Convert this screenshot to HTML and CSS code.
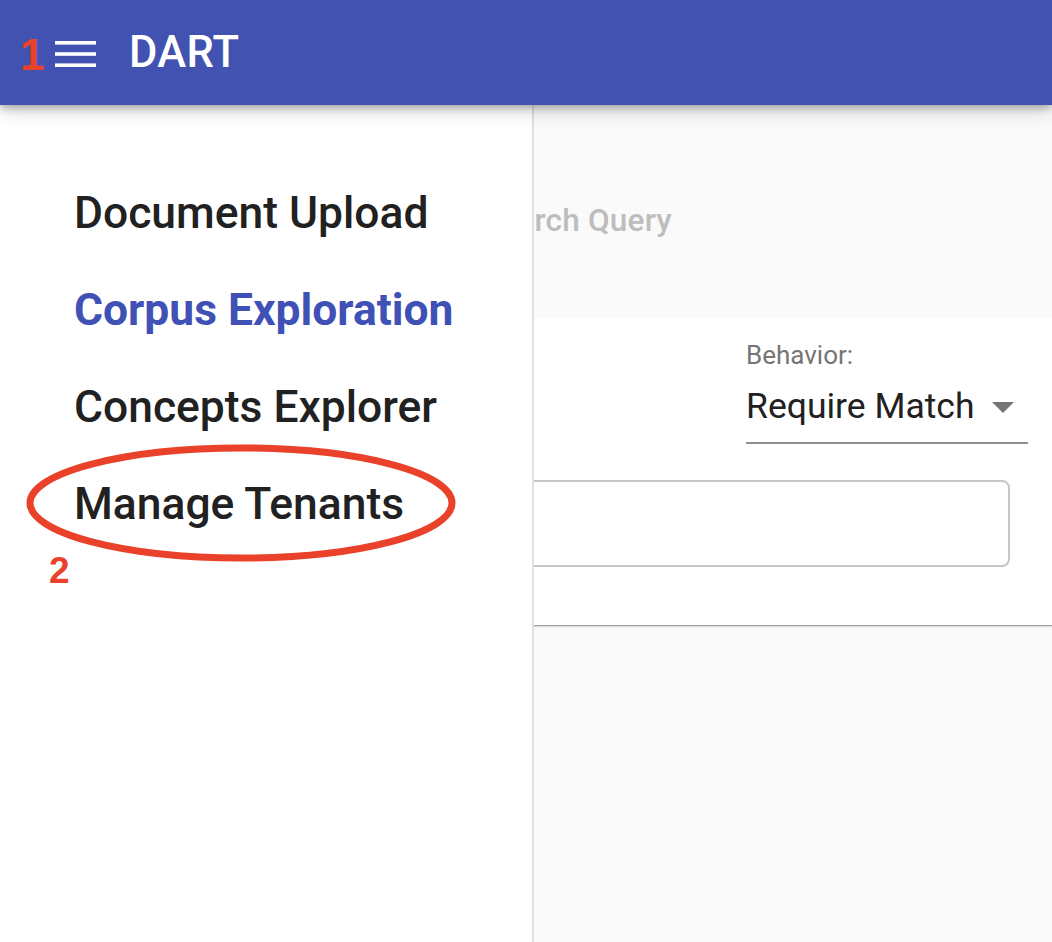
FILE: index.html
```html
<!DOCTYPE html>
<html lang="en">
<head>
<meta charset="utf-8">
<title>DART</title>
<link rel="stylesheet" href="styles.css">
</head>
<body>
<header class="appbar">
  <span class="note note-1">1</span>
  <button class="menu-btn" aria-label="Menu">
    <svg width="41" height="26" viewBox="0 0 41 26"><rect x="0" y="0" width="41" height="3.6" fill="#fff"/><rect x="0" y="11.2" width="41" height="3.6" fill="#fff"/><rect x="0" y="22.4" width="41" height="3.6" fill="#fff"/></svg>
  </button>
  <span class="title">DART</span>
</header>
<div class="page">
  <main class="main">
    <section class="search">
      <span class="placeholder">Search Query</span>
    </section>
    <section class="card">
      <div class="card-row">
        <div class="behavior">
          <label class="label">Behavior:</label>
          <div class="select">
            <span class="select-value">Require Match</span>
            <svg class="caret" width="22" height="11" viewBox="0 0 22 11"><path d="M0 0 L22 0 L11 11 Z" fill="#757575"/></svg>
          </div>
        </div>
      </div>
      <div class="outlined"></div>
    </section>
    <section class="rest"></section>
  </main>
  <nav class="drawer">
    <a class="nav-item">Document Upload</a>
    <a class="nav-item active">Corpus Exploration</a>
    <a class="nav-item">Concepts Explorer</a>
    <a class="nav-item">Manage Tenants</a>
    <svg class="ring" width="432" height="122" viewBox="0 0 432 122"><ellipse cx="216" cy="60" rx="211" ry="55" fill="none" stroke="#E9412A" stroke-width="7"/></svg>
    <span class="note note-2">2</span>
  </nav>
</div>
</body>
</html>
```
FILE: styles.css
```css
* { box-sizing: border-box; }
html, body { margin: 0; padding: 0; }
body {
  font-family: Roboto, "Liberation Sans", Arial, sans-serif;
  background: #fafafa;
  width: 1052px;
  height: 942px;
  overflow: hidden;
}
.appbar {
  position: relative;
  z-index: 3;
  height: 105px;
  background: #4152B1;
  display: flex;
  align-items: center;
  padding-left: 20px;
  box-shadow: 0 3px 8px rgba(0,0,0,0.28), 0 8px 18px rgba(0,0,0,0.12);
}
.note {
  color: #E9412A;
  font-family: "Liberation Sans", Arial, sans-serif;
  font-weight: 700;
}
.note-1 {
  font-size: 44px;
  line-height: 1;
  margin-top: 4px;
  width: 30px;
}
.menu-btn {
  background: none;
  border: 0;
  padding: 0;
  margin-left: 5px;
  display: flex;
  margin-top: 2px;
}
.title {
  color: #fff;
  font-size: 43.5px;
  font-weight: 500;
  margin-left: 33px;
  letter-spacing: 0.3px;
}
.page {
  position: relative;
  height: 837px;
}
.main {
  display: flex;
  flex-direction: column;
  height: 100%;
}
.search {
  height: 213px;
  background: #fafafa;
  display: flex;
  align-items: center;
  padding-left: 481px;
  padding-top: 18px;
}
.placeholder {
  color: #bdbdbd;
  font-size: 31.5px;
  font-weight: 500;
  letter-spacing: 0.2px;
}
.card {
  background: #fff;
  height: 307px;
  box-shadow: 0 1px 1px rgba(0,0,0,0.3), 0 2px 2px rgba(0,0,0,0.1);
  display: flex;
  flex-direction: column;
  position: relative;
  z-index: 1;
}
.card-row {
  display: flex;
  justify-content: flex-end;
  padding: 22px 24px 0 0;
}
.behavior {
  width: 282px;
  display: flex;
  flex-direction: column;
}
.label {
  color: #757575;
  font-size: 26px;
  line-height: 30px;
}
.select {
  display: flex;
  align-items: center;
  justify-content: space-between;
  height: 74px;
  border-bottom: 2px solid #8f8f8f;
  padding-right: 14px;
  padding-top: 0;
}
.select-value {
  color: #212121;
  font-size: 35.5px;
}
.caret { margin-top: 2px; }
.outlined {
  margin: 36px 42px 0 0;
  height: 87px;
  border: 2px solid #c6c6c6;
  border-radius: 8px;
}
.rest { flex: 1; background: #fafafa; }
.drawer {
  position: absolute;
  top: 0;
  left: 0;
  bottom: 0;
  width: 534px;
  z-index: 2;
  background: #fff;
  border-right: 2px solid #e0e0e0;
  display: flex;
  flex-direction: column;
  padding: 60px 0 0 74px;
}
.nav-item {
  color: #212121;
  font-size: 44.4px;
  font-weight: 500;
  line-height: 97px;
  height: 97px;
  display: block;
}
.nav-item.active {
  color: #3F51B5;
  font-weight: 700;
}
.ring {
  position: absolute;
  left: 25px;
  top: 338px;
}
.note-2 {
  position: absolute;
  left: 49px;
  top: 447px;
  font-size: 37px;
  line-height: 1;
}
```
